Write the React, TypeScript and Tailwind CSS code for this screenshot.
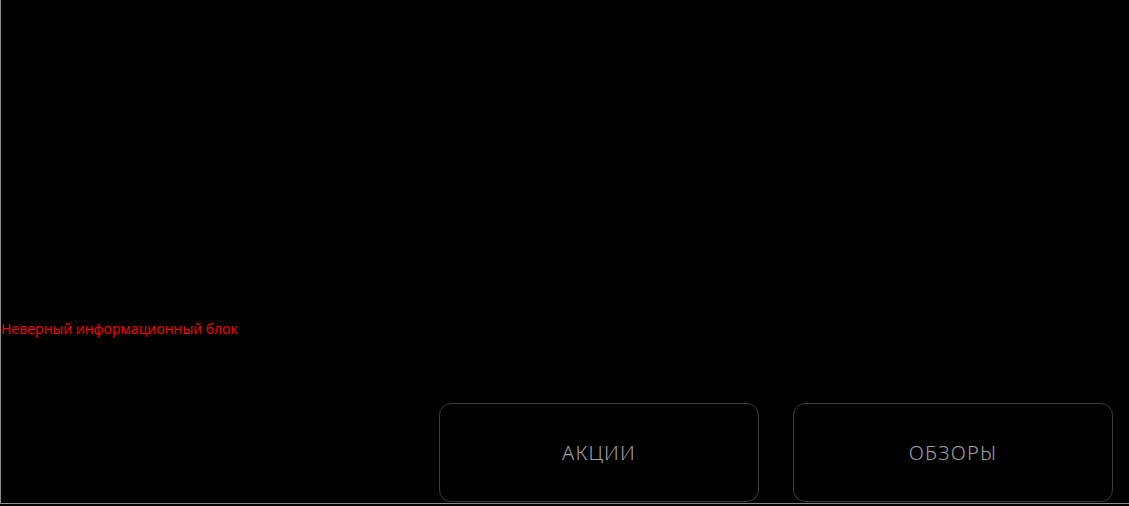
import React from "react";

const tabs = ["АКЦИИ", "ОБЗОРЫ"];

const App: React.FC = () => {
  return (
    <div className="min-h-screen bg-black">
      <div className="flex flex-col h-[504px] border-l border-b border-[#8c8c8c] bg-black">
        <p
          className="mt-[319px] text-[14px] leading-[19px] text-[#ff0000]"
          style={{ fontFamily: '"Open Sans", "Noto Sans", sans-serif' }}
        >
          Неверный информационный блок
        </p>
        <div className="mt-auto flex justify-end gap-[34px] pr-[16px] pb-[1px]">
          {tabs.map((t) => (
            <button
              key={t}
              className="w-[320px] h-[99px] rounded-[12px] border border-[#3c3c3c] bg-black text-[20px] font-light text-[#9ba0a6] tracking-[1.2px]"
              style={{ fontFamily: '"Noto Sans", "Open Sans", sans-serif' }}
            >
              {t}
            </button>
          ))}
        </div>
      </div>
    </div>
  );
};

export default App;
